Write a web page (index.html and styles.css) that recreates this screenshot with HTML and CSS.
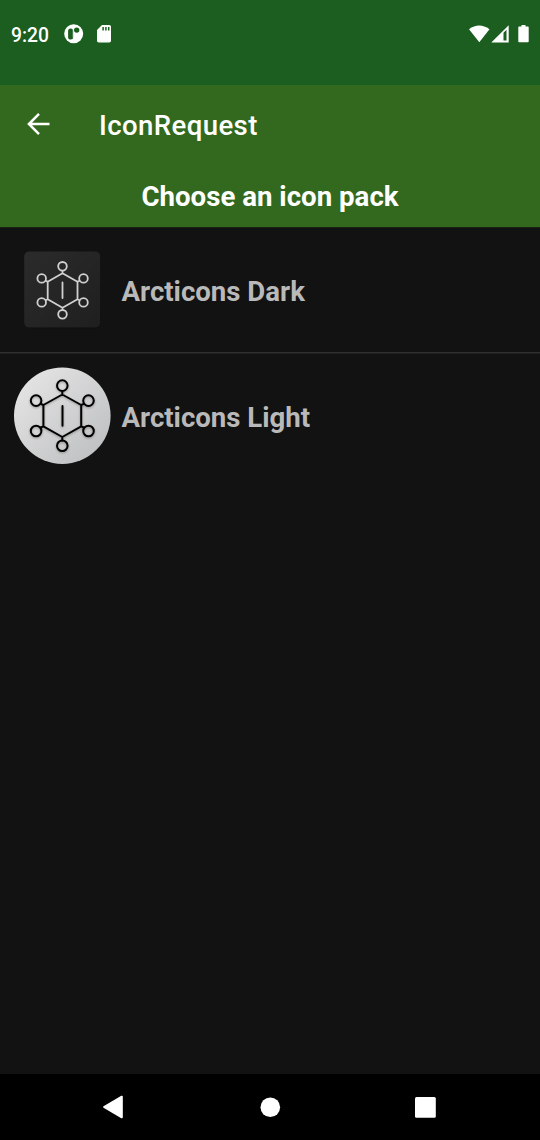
FILE: index.html
```html
<!DOCTYPE html>
<html lang="en">
<head>
<meta charset="utf-8">
<title>IconRequest</title>
<link rel="stylesheet" href="styles.css">
</head>
<body>
<div class="screen">
  <div class="status">
    <span class="time">9:20</span>
    <svg class="notif" width="20" height="20" viewBox="0 0 20 20"><circle cx="9.700" cy="9.700" r="9.500" fill="#fff"/><path d="M4.100 6.900q0-2.500 2.600-2.500t2.600 2.500v6.400q0 2.300-2.600 2.300t-2.600-2.300z" fill="#1b5e20"/><circle cx="12.700" cy="6.100" r="2.700" fill="#1b5e20"/><path d="M9.200 3.700v10" stroke="#fff" stroke-width=".7"/></svg>
    <svg class="sd" width="14" height="18" viewBox="0 0 14 18"><path d="M5 0h7.200Q14 0 14 1.800v14.000q0 1.600-1.800 1.600H1.800Q0 17.400 0 15.800V5z" fill="#fff"/><path d="M6.100 2v3.500M8.900 2v3.500M11.700 2v3.500" stroke="#1b5e20" stroke-width="1.500"/></svg>
    <span class="grow"></span>
    <svg width="60" height="20" viewBox="0 0 60 20"><path d="M0 4.300Q10-3.200 20.500 4.300L10.300 17.200z" fill="#fff"/><path d="M22.300 17.500L39.700.2V17.500z" fill="#fff"/><path d="M34.500 7.800L37.500 4.800V15.600H34.500z" fill="#1b5e20"/><path d="M50.100 1.500h2.400V0h4v1.500h2.400q.8 0 .8.800v14.100q0 .8-.8.800h-8.800q-.8 0-.8-.8V2.300q0-.8.800-.8z" fill="#fff"/></svg>
  </div>
  <header class="appbar">
    <svg class="back" width="24" height="24" viewBox="0 0 24 24"><path d="M23.500 12H3M13 1.900L2.900 12l10.100 10.100" fill="none" stroke="#fff" stroke-width="2.500"/></svg>
    <h1 class="title">IconRequest</h1>
  </header>
  <h2 class="heading">Choose an icon pack</h2>
  <main class="list">
    <div class="row first">
      <svg class="pack" width="98" height="98" viewBox="0 0 98 98">
        <defs><linearGradient id="dark" x1="0" y1="0" x2="1" y2="1"><stop offset="0" stop-color="#2b2b2b"/><stop offset="1" stop-color="#1f1f1f"/></linearGradient></defs>
        <rect x="10.500" y="11.300" width="76" height="76" rx="5" fill="#0c0c0c"/>
        <rect x="10.200" y="10.600" width="76" height="76" rx="5" fill="url(#dark)"/>
        <g fill="none" stroke="#d0d0d0" stroke-width="1.800" stroke-linecap="round" stroke-linejoin="round">
          <path d="M48.500 32.300L63.500 40.700V58.300L48.500 66.700L33.700 58.300V40.700zM48.500 41.500V57M48.500 29.800v2.500M48.500 66.700v2.500M63.500 40.700l2-.9M63.500 58.300l2 .9M33.700 40.700l-2-.9M33.700 58.300l-2 .9"/>
          <circle cx="48.500" cy="25.300" r="4.300"/><circle cx="48.500" cy="73.300" r="4.300"/><circle cx="27.700" cy="37.400" r="4.300"/><circle cx="69.500" cy="37.400" r="4.300"/><circle cx="27.700" cy="61.400" r="4.300"/><circle cx="69.500" cy="61.400" r="4.300"/>
        </g>
      </svg>
      <span class="name">Arcticons Dark</span>
    </div>
    <div class="row">
      <svg class="pack" width="98" height="98" viewBox="0 0 98 98">
        <defs><linearGradient id="light" x1=".1" y1=".1" x2=".9" y2=".9"><stop offset="0" stop-color="#e4e4e5"/><stop offset="1" stop-color="#bfc0c1"/></linearGradient></defs>
        <circle cx="48.300" cy="48.700" r="48.300" fill="url(#light)"/>
        <g class="molecule" fill="none" stroke="#000" stroke-width="2" stroke-linecap="round" stroke-linejoin="round">
          <path d="M48.300 27.500L67.200 38V59.300L48.300 70L29.400 59.300V38zM48.500 39V58.800M48.300 24v3.500M48.300 70v3.500M67.200 38l2.600-1.200M67.200 59.300l2.600 1.200M29.400 38l-2.600-1.200M29.400 59.300l-2.600 1.200"/>
          <circle cx="48.300" cy="18.600" r="5.300"/><circle cx="48.300" cy="78.800" r="5.300"/><circle cx="22.100" cy="33.600" r="5.300"/><circle cx="74.500" cy="33.600" r="5.300"/><circle cx="22.100" cy="64" r="5.300"/><circle cx="74.500" cy="64" r="5.300"/>
        </g>
      </svg>
      <span class="name">Arcticons Light</span>
    </div>
  </main>
  <nav class="nav">
    <svg width="540" height="66" viewBox="0 0 540 66" fill="#fff"><path d="M103.500 32.200q-1 .8 0 1.600L121.300 44.200q1.500.6 1.500-1V22.800q0-1.600-1.500-1z"/><circle cx="270.300" cy="33.200" r="9.800"/><rect x="415" y="23" width="20.800" height="20.700" rx="1.500"/></svg>
  </nav>
</div>
</body>
</html>
```
FILE: styles.css
```css
body { margin: 0; background: #121212; }
.screen {
  display: flex; flex-direction: column; width: 540px; height: 1140px;
  background: #121212; color: #fff; font-family: Roboto, sans-serif; overflow: hidden;
}
svg { display: block; flex: none; }
.status {
  display: flex; align-items: flex-start; box-sizing: border-box; height: 85px;
  padding: 25px 11px 0; background: #1b5e20;
}
.time { width: 53px; font-size: 19.300px; line-height: 22px; font-weight: 500; }
.notif { margin-top: -1px; }
.sd { margin-left: 13px; }
.grow { flex: 1; }
.appbar {
  display: flex; align-items: center; box-sizing: border-box; height: 79px;
  padding-left: 26px; background: #33691e;
}
.back { margin-top: -1px; }
.title { margin: 2px 0 0 49px; font-size: 27.600px; line-height: 32px; font-weight: 500; letter-spacing: 0.380px; }
.heading {
  box-sizing: border-box; height: 63px; margin: 0; padding-top: 16px;
  background: #33691e; font-size: 27.650px; line-height: 33px; font-weight: 700; text-align: center;
}
.list { flex: 1; box-shadow: inset 0 1px #182211; }
.row { display: flex; align-items: center; box-sizing: border-box; height: 125px; padding-left: 14px; }
.first { height: 126px; border-bottom: 1px solid #303030; box-shadow: 0 1px #1f1f1f; }
.name { margin: 4px 0 0 9.500px; color: #b9b9b9; font-size: 27.600px; line-height: 33px; font-weight: 700; }
.molecule { filter: drop-shadow(0 1px 1px rgba(0, 0, 0, 0.3)); }
.nav { height: 66px; background: #000; }
```
